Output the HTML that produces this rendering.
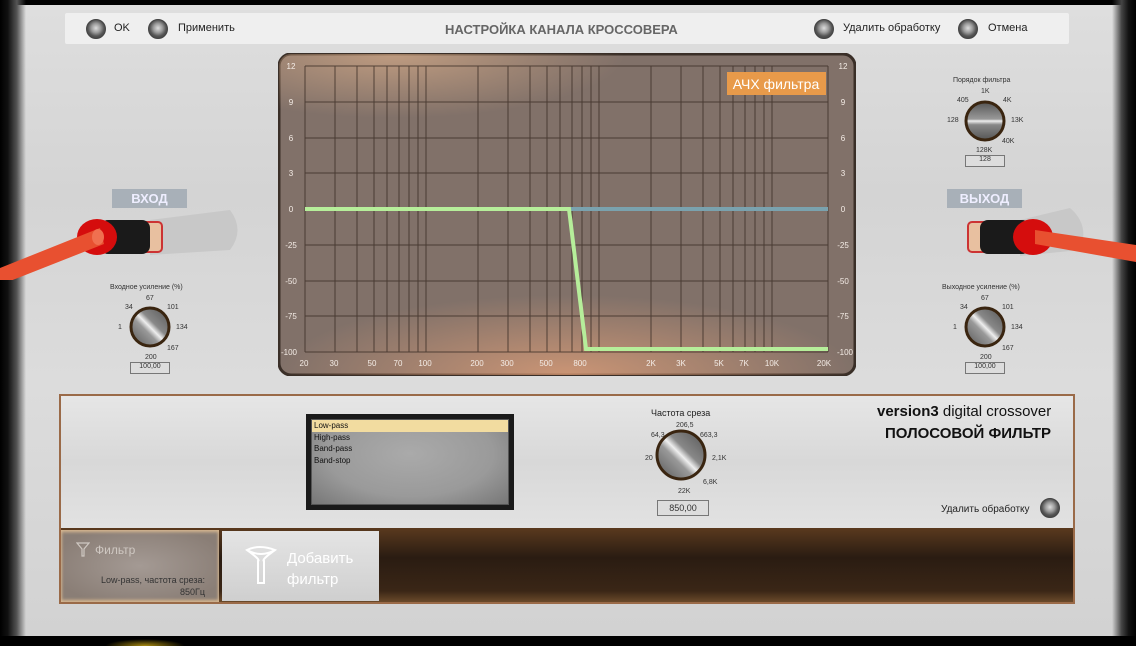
<!DOCTYPE html>
<html><head><meta charset="utf-8"><style>
*{margin:0;padding:0;box-sizing:border-box}
body{width:1136px;height:646px;background:#000;position:relative;overflow:hidden;font-family:"Liberation Sans","DejaVu Sans",sans-serif;}
.abs{position:absolute}
.panel{left:10px;top:5px;width:1114px;height:631px;background:linear-gradient(180deg,#dedede,#d4d4d4 30%,#dcdcdc 60%,#d2d2d2);}
.ledge{left:0;top:0;width:26px;height:646px;background:linear-gradient(90deg,#000,#111 30%,#555 65%,rgba(200,200,200,0));}
.redge{left:1112px;top:0;width:24px;height:646px;background:linear-gradient(90deg,rgba(200,200,200,0),#444 40%,#111 70%,#000);}
.topbar{left:65px;top:13px;width:1004px;height:31px;background:#efefef;border-radius:2px}
.btn{width:20px;height:20px;border-radius:50%;background:radial-gradient(circle at 50% 45%,#ddd 0,#999 35%,#555 60%,#333 100%);border:1px solid #444}
.t{font-size:11px;color:#222;white-space:nowrap}
.sm{font-size:7px;color:#333;white-space:nowrap}
.lab{background:#a8b0b8;color:#eef;font-weight:bold;font-size:13px;text-align:center;line-height:19px}
.vbox{border:1px solid #777;background:#ddd;font-size:7px;text-align:center;color:#333}
</style></head><body>
<div class="abs panel"></div>
<div class="abs ledge"></div>
<div class="abs redge"></div>
<div class="abs" style="left:0;top:636px;width:1136px;height:10px;background:#000"></div>
<div class="abs" style="left:105px;top:639px;width:80px;height:7px;background:radial-gradient(ellipse at 50% 100%,#a88a10,#000 70%)"></div>

<div class="abs topbar"></div>
<div class="abs btn" style="left:86px;top:19px"></div>
<div class="abs t" style="left:114px;top:22px">OK</div>
<div class="abs btn" style="left:148px;top:19px"></div>
<div class="abs t" style="left:178px;top:22px">Применить</div>
<div class="abs" style="left:445px;top:22px;font-size:13px;font-weight:bold;color:#666">НАСТРОЙКА КАНАЛА КРОССОВЕРА</div>
<div class="abs btn" style="left:814px;top:19px"></div>
<div class="abs t" style="left:843px;top:22px">Удалить обработку</div>
<div class="abs btn" style="left:958px;top:19px"></div>
<div class="abs t" style="left:988px;top:22px">Отмена</div>

<!-- graph -->
<svg class="abs" style="left:278px;top:53px" width="578" height="323" viewBox="278 53 578 323">
<defs>
<radialGradient id="g1" cx="0.2" cy="0" r="0.4"><stop offset="0" stop-color="#e8b890" stop-opacity=".6"/><stop offset="1" stop-color="#e8b890" stop-opacity="0"/></radialGradient>
<radialGradient id="g2" cx="0.5" cy="1" r="0.5"><stop offset="0" stop-color="#eaa47a" stop-opacity=".7"/><stop offset="1" stop-color="#eaa47a" stop-opacity="0"/></radialGradient>
</defs>
<rect x="279" y="54" width="576" height="321" rx="12" fill="#817169" stroke="#3a2f28" stroke-width="3"/>
<rect x="279" y="54" width="576" height="160" rx="12" fill="url(#g1)"/>
<rect x="279" y="215" width="576" height="160" rx="12" fill="url(#g2)"/>
<g stroke="#3c2e26" stroke-width="1" opacity=".8">
<line x1="305" y1="66" x2="828" y2="66"/><line x1="305" y1="102" x2="828" y2="102"/><line x1="305" y1="138" x2="828" y2="138"/><line x1="305" y1="173" x2="828" y2="173"/><line x1="305" y1="245" x2="828" y2="245"/><line x1="305" y1="281" x2="828" y2="281"/><line x1="305" y1="316" x2="828" y2="316"/><line x1="305" y1="352" x2="828" y2="352"/>
<line x1="305" y1="66" x2="305" y2="352"/><line x1="335" y1="66" x2="335" y2="352"/><line x1="357" y1="66" x2="357" y2="352"/><line x1="374" y1="66" x2="374" y2="352"/><line x1="387" y1="66" x2="387" y2="352"/><line x1="399" y1="66" x2="399" y2="352"/><line x1="409" y1="66" x2="409" y2="352"/><line x1="418" y1="66" x2="418" y2="352"/><line x1="426" y1="66" x2="426" y2="352"/><line x1="478" y1="66" x2="478" y2="352"/><line x1="508" y1="66" x2="508" y2="352"/><line x1="530" y1="66" x2="530" y2="352"/><line x1="547" y1="66" x2="547" y2="352"/><line x1="560" y1="66" x2="560" y2="352"/><line x1="572" y1="66" x2="572" y2="352"/><line x1="582" y1="66" x2="582" y2="352"/><line x1="591" y1="66" x2="591" y2="352"/><line x1="599" y1="66" x2="599" y2="352"/><line x1="651" y1="66" x2="651" y2="352"/><line x1="681" y1="66" x2="681" y2="352"/><line x1="703" y1="66" x2="703" y2="352"/><line x1="720" y1="66" x2="720" y2="352"/><line x1="733" y1="66" x2="733" y2="352"/><line x1="745" y1="66" x2="745" y2="352"/><line x1="755" y1="66" x2="755" y2="352"/><line x1="764" y1="66" x2="764" y2="352"/><line x1="772" y1="66" x2="772" y2="352"/><line x1="828" y1="66" x2="828" y2="352"/>
</g>
<line x1="305" y1="209" x2="828" y2="209" stroke="#7aa2ae" stroke-width="4"/>
<polyline points="305,209 569,209 586,349 828,349" fill="none" stroke="#b6ee9a" stroke-width="4"/>
<rect x="727" y="72" width="99" height="23" fill="#e89a4a"/>
<text x="776" y="89" font-size="14" fill="#fff" text-anchor="middle" font-family="Liberation Sans">АЧХ фильтра</text>
<g font-size="8" fill="#f4ece6" font-family="Liberation Sans" text-anchor="middle">
<text x="291" y="69">12</text><text x="291" y="105">9</text><text x="291" y="141">6</text><text x="291" y="176">3</text><text x="291" y="212">0</text><text x="291" y="248">-25</text><text x="291" y="284">-50</text><text x="291" y="319">-75</text><text x="289" y="355">-100</text>
<text x="843" y="69">12</text><text x="843" y="105">9</text><text x="843" y="141">6</text><text x="843" y="176">3</text><text x="843" y="212">0</text><text x="843" y="248">-25</text><text x="843" y="284">-50</text><text x="843" y="319">-75</text><text x="845" y="355">-100</text>
<text x="304" y="366">20</text><text x="334" y="366">30</text><text x="372" y="366">50</text><text x="398" y="366">70</text><text x="425" y="366">100</text><text x="477" y="366">200</text><text x="507" y="366">300</text><text x="546" y="366">500</text><text x="580" y="366">800</text><text x="651" y="366">2K</text><text x="681" y="366">3K</text><text x="719" y="366">5K</text><text x="744" y="366">7K</text><text x="772" y="366">10K</text><text x="824" y="366">20K</text>
</g>
</svg>

<!-- left connector -->
<div class="abs lab" style="left:112px;top:189px;width:75px">ВХОД</div>
<svg class="abs" style="left:0;top:200px" width="250" height="80">
<path d="M150 20 L230 10 Q245 30 230 50 L150 55Z" fill="#c4c4c4" opacity=".8"/>
<rect x="140" y="22" width="22" height="30" rx="4" fill="#e8c0a0" stroke="#c33" stroke-width="2"/>
<rect x="100" y="20" width="50" height="34" rx="8" fill="#1a1a1a"/>
<ellipse cx="97" cy="37" rx="20" ry="18" fill="#d50d0d"/>
<path d="M-5 70 L100 28 L104 44 L0 85Z" fill="#e85030"/>
<ellipse cx="98" cy="37" rx="6" ry="8" fill="#f07050"/>
</svg>
<div class="abs sm" style="left:110px;top:284px">Входное усиление (%)</div>

<!-- right connector -->
<div class="abs lab" style="left:947px;top:189px;width:75px">ВЫХОД</div>
<svg class="abs" style="left:960px;top:200px" width="176" height="80">
<path d="M60 20 L110 8 Q130 25 120 50 L60 56Z" fill="#c4c4c4" opacity=".8"/>
<rect x="8" y="22" width="22" height="30" rx="4" fill="#e8c0a0" stroke="#c33" stroke-width="2"/>
<rect x="20" y="20" width="50" height="34" rx="8" fill="#1a1a1a"/>
<ellipse cx="73" cy="37" rx="20" ry="18" fill="#d50d0d"/>
<path d="M75 30 L176 45 L176 62 L75 44Z" fill="#e85030"/>
</svg>
<div class="abs sm" style="left:942px;top:284px">Выходное усиление (%)</div>

<div class="abs sm" style="left:146px;top:295px">67</div><div class="abs sm" style="left:125px;top:304px">34</div><div class="abs sm" style="left:167px;top:304px">101</div><div class="abs sm" style="left:118px;top:324px">1</div><div class="abs sm" style="left:176px;top:324px">134</div><div class="abs sm" style="left:167px;top:345px">167</div><div class="abs sm" style="left:145px;top:354px">200</div>
<div class="abs vbox" style="left:130px;top:362px;width:40px;height:12px">100,00</div>
<div class="abs sm" style="left:981px;top:295px">67</div><div class="abs sm" style="left:960px;top:304px">34</div><div class="abs sm" style="left:1002px;top:304px">101</div><div class="abs sm" style="left:953px;top:324px">1</div><div class="abs sm" style="left:1011px;top:324px">134</div><div class="abs sm" style="left:1002px;top:345px">167</div><div class="abs sm" style="left:980px;top:354px">200</div>
<div class="abs vbox" style="left:965px;top:362px;width:40px;height:12px">100,00</div>
<div class="abs sm" style="left:953px;top:77px">Порядок фильтра</div>
<div class="abs sm" style="left:981px;top:88px">1K</div><div class="abs sm" style="left:957px;top:97px">405</div><div class="abs sm" style="left:1003px;top:97px">4K</div><div class="abs sm" style="left:947px;top:117px">128</div><div class="abs sm" style="left:1011px;top:117px">13K</div><div class="abs sm" style="left:1002px;top:138px">40K</div><div class="abs sm" style="left:976px;top:147px">128K</div>
<div class="abs vbox" style="left:965px;top:155px;width:40px;height:12px">128</div>

<!-- bottom panel -->
<div class="abs" style="left:59px;top:394px;width:1016px;height:136px;border:2px solid #9a6a48;background:linear-gradient(180deg,#e6e6e6,#d8d8d8 50%,#e2e2e2)"></div>
<div class="abs" style="left:306px;top:414px;width:208px;height:96px;background:#1a1a1a;padding:5px">
<div style="width:100%;height:100%;background:radial-gradient(ellipse at 50% 40%,#aaa,#9a9a9a 60%,#777);border:1px solid #555;font-size:8px;color:#111;line-height:11.5px">
<div style="background:#f2dca0;padding-left:2px">Low-pass</div><div style="padding-left:2px">High-pass</div><div style="padding-left:2px">Band-pass</div><div style="padding-left:2px">Band-stop</div></div></div>
<div class="abs" style="left:651px;top:408px;font-size:9px;color:#222">Частота среза</div>
<div class="abs sm" style="left:676px;top:422px">206,5</div><div class="abs sm" style="left:651px;top:432px">64,3</div><div class="abs sm" style="left:700px;top:432px">663,3</div><div class="abs sm" style="left:645px;top:455px">20</div><div class="abs sm" style="left:712px;top:455px">2,1K</div><div class="abs sm" style="left:703px;top:479px">6,8K</div><div class="abs sm" style="left:678px;top:488px">22K</div>
<div class="abs vbox" style="left:657px;top:500px;width:52px;height:16px;font-size:9px;line-height:14px">850,00</div>
<div class="abs" style="left:877px;top:403px;font-size:15px;color:#111;white-space:nowrap"><b>version3</b> digital crossover</div>
<div class="abs" style="left:885px;top:425px;font-size:15px;font-weight:bold;color:#111">ПОЛОСОВОЙ ФИЛЬТР</div>
<div class="abs t" style="left:941px;top:504px;font-size:10px">Удалить обработку</div>
<div class="abs btn" style="left:1040px;top:498px"></div>

<!-- knobs -->
<svg class="abs" style="left:0;top:0" width="1136" height="646">
<defs>
<linearGradient id="kn" x1="0" y1="1" x2="1" y2="0"><stop offset="0" stop-color="#555"/><stop offset=".4" stop-color="#999"/><stop offset=".5" stop-color="#eee"/><stop offset=".6" stop-color="#888"/><stop offset="1" stop-color="#555"/></linearGradient>
<linearGradient id="kh" x1="0" y1="0" x2="0" y2="1"><stop offset="0" stop-color="#555"/><stop offset=".45" stop-color="#999"/><stop offset=".5" stop-color="#eee"/><stop offset=".6" stop-color="#888"/><stop offset="1" stop-color="#555"/></linearGradient>
</defs>
<circle cx="150" cy="327" r="19" fill="url(#kn)" stroke="#3a2510" stroke-width="3"/>
<circle cx="985" cy="327" r="19" fill="url(#kn)" stroke="#3a2510" stroke-width="3"/>
<circle cx="985" cy="121" r="19" fill="url(#kh)" stroke="#3a2510" stroke-width="3"/>
<circle cx="681" cy="455" r="24" fill="url(#kn)" stroke="#3a2510" stroke-width="3"/>
</svg>

<!-- tabs -->
<div class="abs" style="left:59px;top:528px;width:1016px;height:76px;border:2px solid #9a6a48;border-top:none;background:linear-gradient(180deg,#5a3a1e,#2a1c12 40%,#3a2616 85%,#6a4a2a)"></div>
<div class="abs" style="left:61px;top:530px;width:158px;height:72px;background:radial-gradient(ellipse at 50% 50%,#a49a94,#8a7e76 80%);box-shadow:inset 0 2px 3px #d8b890,inset 0 -2px 3px #d8b890"></div>
<svg class="abs" style="left:76px;top:541px" width="14" height="16"><path d="M1 2 H13 L8 8 V15 H6 V8Z" fill="none" stroke="#cfc8c2" stroke-width="1.2"/></svg>
<div class="abs" style="left:95px;top:543px;font-size:12px;color:#cfc8c2">Фильтр</div>
<div class="abs" style="left:101px;top:574px;font-size:9px;color:#333;text-align:right;width:104px;line-height:12px">Low-pass, частота среза:<br>850Гц</div>
<div class="abs" style="left:222px;top:531px;width:157px;height:70px;background:linear-gradient(180deg,#e4e4e4,#cfcfcf)"></div>
<svg class="abs" style="left:244px;top:545px" width="36" height="42"><path d="M3 5 Q15 -1 31 5 Q17 15 20 16 V38 H14 V16 Q17 15 3 5Z M3 5 Q17 13 31 5" fill="none" stroke="#fff" stroke-width="2"/></svg>
<div class="abs" style="left:287px;top:548px;font-size:15px;color:#fff;line-height:21px">Добавить<br>фильтр</div>
</body></html>
